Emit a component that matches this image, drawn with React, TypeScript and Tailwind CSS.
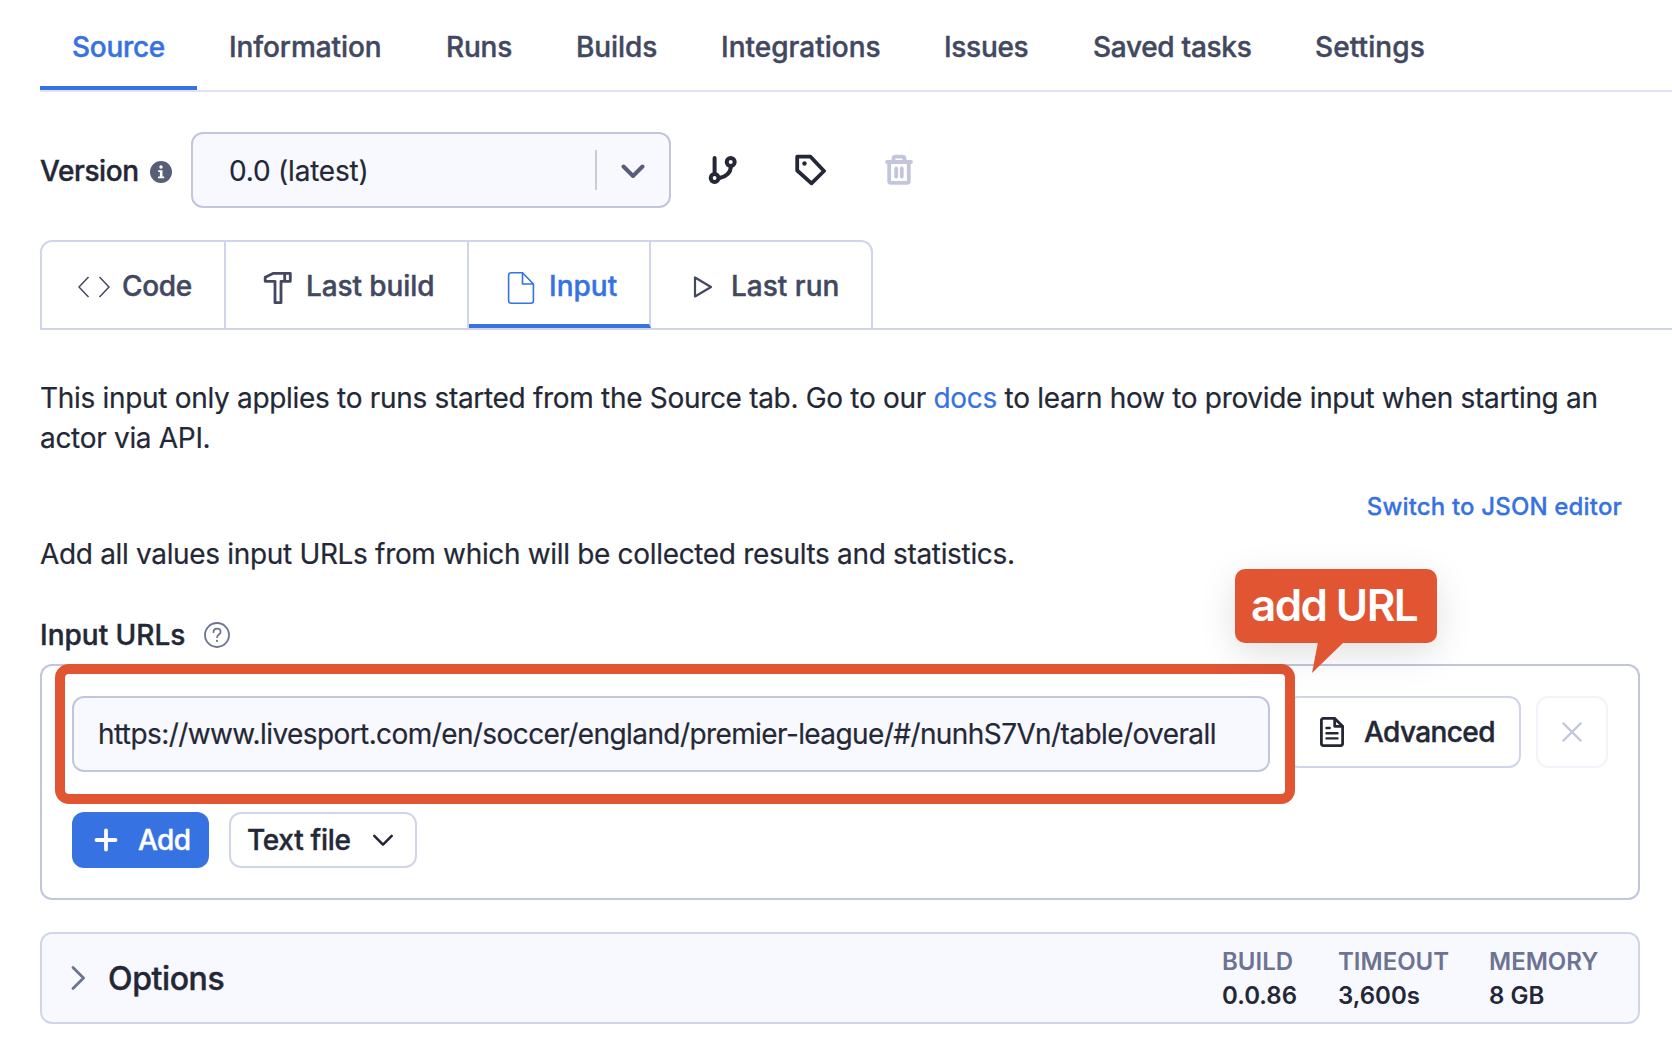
import React from "react";

const topTabs = [
  { label: "Source", cls: "w-[157px] tracking-[-0.3px]" },
  { label: "Information", cls: "w-[217px] tracking-[-0.1px]" },
  { label: "Runs", cls: "w-[130px] tracking-[-0.2px]" },
  { label: "Builds", cls: "w-[145px] tracking-[-0.1px]" },
  { label: "Integrations", cls: "w-[223px]" },
  { label: "Issues", cls: "w-[149px] tracking-[-0.3px]" },
  { label: "Saved tasks", cls: "w-[222px] tracking-[-0.3px]" },
  { label: "Settings", cls: "w-[180px] tracking-[0.1px]" },
];

const stats = [
  { label: "BUILD", value: "0.0.86", width: "w-[116px]" },
  { label: "TIMEOUT", value: "3,600s", width: "w-[151px]" },
  { label: "MEMORY", value: "8 GB", width: "w-[110px]" },
];

function InfoIcon() {
  return (
    <svg width="22" height="22" viewBox="0 0 22 22">
      <circle cx="11" cy="11" r="11" fill="#585e78" />
      <circle cx="11" cy="6" r="1.7" fill="#fff" />
      <path d="M8.2 9.2h4.3v6.3h1.7v1.8H8v-1.8h1.9V11H8.2z" fill="#fff" />
    </svg>
  );
}

function BranchIcon() {
  return (
    <svg width="30" height="30" viewBox="0 0 30 30" fill="none" stroke="#242836" strokeWidth="4" strokeLinecap="round">
      <path d="M6.600 3v14M23 11.500c-.5 6-4.500 10-11.500 11.500" />
      <circle cx="6.600" cy="23" r="3.900" />
      <circle cx="22.700" cy="7" r="4" />
    </svg>
  );
}

function TagIcon() {
  return (
    <svg width="32" height="32" viewBox="0 0 32 32" fill="none" stroke="#242836" strokeWidth="3.800" strokeLinejoin="round">
      <path d="M3.200 2.700h13.300L30 17 17.500 29.300 3.200 16.500z" />
      <circle cx="10.500" cy="9.500" r="2.200" fill="#242836" stroke="none" />
    </svg>
  );
}

function TrashIcon() {
  return (
    <svg width="28" height="32" viewBox="0 0 28 32" fill="none" stroke="#c1c6dd" strokeWidth="3.800" strokeLinecap="round" strokeLinejoin="round">
      <path d="M2 8h24M8.500 7.500V5c0-1.600.8-2.300 2.200-2.300h6.600c1.400 0 2.200.7 2.200 2.300V7.500M4.200 9v18c0 1.200.6 1.900 1.900 1.900h15.800c1.300 0 1.900-.7 1.900-1.900V9" />
      <path d="M11.200 14.500v8M16.800 14.500v8" />
    </svg>
  );
}

function CodeIcon() {
  return (
    <svg className="mt-1" width="32" height="22" viewBox="0 0 32 22" fill="none" stroke="#414860" strokeWidth="1.500">
      <path d="M10.500 1L1 11l9.500 10M21.500 1L31 11l-9.500 10" />
    </svg>
  );
}

function HammerIcon() {
  return (
    <svg className="mt-1.5" width="30" height="34" viewBox="0 0 30 34" fill="none" stroke="#414860" strokeWidth="2.800" strokeLinejoin="round">
      <path d="M3.200 6.300L11.500 2.300h16.800v8H19V31.700h-6V10.300H3.200z" />
      <path d="M22.700 3v7" />
    </svg>
  );
}

function PageIcon() {
  return (
    <svg className="mt-1.5" width="28" height="34" viewBox="0 0 28 34" fill="none" stroke="#3672e2" strokeWidth="1.600" strokeLinejoin="round">
      <path d="M15.500 1.800H4C2.600 1.800 1.600 2.800 1.600 4.200v25.600c0 1.400 1 2.400 2.400 2.400h20c1.400 0 2.400-1 2.400-2.400V13z" />
      <path d="M15.500 1.800V13h10.900" />
    </svg>
  );
}

function PlayIcon() {
  return (
    <svg className="mt-1" width="20" height="24" viewBox="0 0 20 24" fill="none" stroke="#414860" strokeWidth="2.200" strokeLinejoin="round">
      <path d="M2 2.500v19L18 12z" />
    </svg>
  );
}

function HelpIcon() {
  return (
    <svg width="26" height="26" viewBox="0 0 26 26" fill="none" stroke="#6c7492" strokeWidth="1.800" strokeLinecap="round">
      <circle cx="13" cy="13" r="12" />
      <path d="M9.500 10.200c0-2.100 1.500-3.500 3.600-3.500s3.500 1.300 3.500 3.200c0 2.600-3.500 2.700-3.500 5.300" />
      <circle cx="13" cy="18.900" r="1.100" fill="#6c7492" stroke="none" />
    </svg>
  );
}

function DocIcon() {
  return (
    <svg width="24" height="30" viewBox="0 0 24 30" fill="none" stroke="#242836" strokeWidth="2.800" strokeLinecap="round" strokeLinejoin="round">
      <path d="M14.700 1.400H3.400c-1.200 0-2 .8-2 2v23.200c0 1.200.8 2 2 2h17.200c1.200 0 2-.8 2-2V9.300z" />
      <path d="M14.700 1.800v7.500h7.500" />
      <path d="M6.500 11h3.200M6.500 16.200h11M6.500 21.400h11" strokeWidth="2.400" />
    </svg>
  );
}

function Chevron({ size, stroke, color, down }: { size: number; stroke: number; color: string; down?: boolean }) {
  return (
    <svg width={size} height={size} viewBox="0 0 24 24" fill="none" stroke={color} strokeWidth={stroke} strokeLinecap="round" strokeLinejoin="round">
      <path d={down ? "M2.500 7.500l9.500 9.500 9.500-9.500" : "M7 1.500l10.500 10.500L7 22.500"} />
    </svg>
  );
}

export default function App() {
  return (
    <div className="h-[1050px] w-[1672px] overflow-hidden bg-white pl-10 font-['Inter','Liberation_Sans',sans-serif] text-[28px] text-[#242836]">
      <nav className="flex h-[92px] border-b-2 border-[#e0e3f2] font-medium text-[#414860] [-webkit-text-stroke:0.4px]">
        {topTabs.map((tab, i) => (
          <a
            key={tab.label}
            className={
              (i === 0 ? "border-b-4 border-[#3672e2] text-[#3672e2] " : "") +
              "h-[90px] shrink-0 whitespace-nowrap pl-8 leading-[94px] " +
              tab.cls
            }
          >
            {tab.label}
          </a>
        ))}
      </nav>

      <div className="mt-10 flex h-[76px] items-center">
        <span className="w-[110px] pt-px font-medium tracking-[-0.4px] [-webkit-text-stroke:0.4px]">Version</span>
        <span className="pt-[3px]"><InfoIcon /></span>
        <div className="ml-[19px] flex h-[76px] w-[480px] items-center rounded-[12px] border-2 border-[#c1c6dd] bg-[#f8f9fe] pl-9">
          <span className="grow pt-px tracking-[-0.2px] [-webkit-text-stroke:0.2px]">0.0 (latest)</span>
          <span className="h-10 w-0.5 bg-[#ccc]" />
          <span className="flex w-[72px] justify-center pt-px">
            <Chevron size={24} stroke={4} color="#585e78" down />
          </span>
        </div>
        <div className="ml-[37px] flex items-center">
          <BranchIcon />
          <span className="ml-[56px]"><TagIcon /></span>
          <span className="ml-[59px]"><TrashIcon /></span>
        </div>
      </div>

      <div className="mt-8 flex h-[90px] border-b-2 border-[#d1d5e9] font-medium text-[#414860] [-webkit-text-stroke:0.4px]">
        <div className="flex w-[186px] items-center rounded-tl-[12px] border-x-2 border-t-2 border-[#d1d5e9] pl-9">
          <CodeIcon />
          <span className="ml-3 pt-px tracking-[-0.3px]">Code</span>
        </div>
        <div className="flex w-[243px] items-center border-r-2 border-t-2 border-[#d1d5e9] pl-9">
          <HammerIcon />
          <span className="ml-3.5 pt-px tracking-[-0.1px]">Last build</span>
        </div>
        <div className="flex w-[182px] items-center border-b-4 border-r-2 border-t-2 border-b-[#3672e2] border-r-[#d1d5e9] border-t-[#d1d5e9] pl-[38px] pt-1 text-[#3672e2]">
          <PageIcon />
          <span className="ml-[14px] pt-px">Input</span>
        </div>
        <div className="flex w-[222px] items-center rounded-tr-[12px] border-r-2 border-t-2 border-[#d1d5e9] pl-[42px]">
          <PlayIcon />
          <span className="ml-[18px] pt-px">Last run</span>
        </div>
      </div>

      <div className="mt-12 w-[1600px] leading-10 [-webkit-text-stroke:0.2px]">
        <p className="tracking-[-0.31px]">
          This input only applies to runs started from the Source tab. Go to our <a className="text-[#3672e2]">docs</a> to
          learn how to provide input when starting an <br />
          actor via API.
        </p>
      </div>

      <div className="mt-9 flex h-[26px] w-[1582px] items-center justify-end text-[24px] font-medium tracking-[0.16px] text-[#3672e2] [-webkit-text-stroke:0.3px]">
        Switch to JSON editor
      </div>
      <p className="mt-3.5 leading-10 tracking-[-0.33px] [-webkit-text-stroke:0.2px]">
        Add all values input URLs from which will be collected results and statistics.
      </p>

      <div className="mt-10 flex h-10 items-center pt-px">
        <span className="w-[146px] whitespace-nowrap font-medium [-webkit-text-stroke:0.4px]">Input URLs</span>
        <span className="ml-[18px]"><HelpIcon /></span>
      </div>

      <section className="relative mt-[10px] h-[236px] w-[1600px] rounded-[12px] border-2 border-[#c1c6dd] px-[30px] pt-[30px]">
        <div className="flex">
          <div className="flex h-[76px] w-[1198px] shrink-0 items-center whitespace-nowrap rounded-[12px] border-2 border-[#c1c6dd] bg-[#f8f9fe] pl-6 tracking-[-0.59px] [-webkit-text-stroke:0.2px]">
            https://www.livesport.com/en/soccer/england/premier-league/#/nunhS7Vn/table/overall
          </div>
          <button className="ml-4 flex h-[72px] w-[235px] shrink-0 items-center rounded-[12px] border-2 border-[#d1d5e9] pl-8 font-medium [-webkit-text-stroke:0.4px]">
            <DocIcon />
            <span className="ml-5 tracking-[-0.6px]">Advanced</span>
          </button>
          <button className="ml-[15px] flex h-[72px] w-[72px] shrink-0 items-center justify-center rounded-[12px] border-2 border-[#f2f3fb]">
            <svg width="20" height="20" viewBox="0 0 20 20" stroke="#c1c6dd" strokeWidth="2.400" strokeLinecap="round">
              <path d="M1.500 1.500l17 17M18.500 1.500l-17 17" />
            </svg>
          </button>
        </div>
        <div className="mt-10 flex gap-5 font-medium [-webkit-text-stroke:0.4px]">
          <button className="flex h-14 w-[137px] items-center rounded-[12px] bg-[#3672e2] pl-[22px] text-white">
            <svg width="24" height="24" viewBox="0 0 24 24" stroke="#fff" strokeWidth="3.800" strokeLinecap="round">
              <path d="M12 2.500v19M2.500 12h19" />
            </svg>
            <span className="ml-5 tracking-[-0.6px]">Add</span>
          </button>
          <button className="flex h-14 w-[188px] items-center rounded-[12px] border-2 border-[#d1d5e9] pl-4">
            <span className="w-[104px] whitespace-nowrap text-left tracking-[-0.3px]">Text file</span>
            <span className="ml-[21px]"><Chevron size={22} stroke={2.8} color="#242836" down /></span>
          </button>
        </div>

        {/* Annotation frame and its callout */}
        <div className="absolute -top-0.5 left-[13px] h-[140px] w-[1240px] rounded-[14px] border-[10px] border-[#e15533]" />
        <div className="absolute -top-[97px] left-[1193px] h-[74px] w-[202px] rounded-[10px] bg-[#e15533] shadow-[0_10px_36px_rgba(0,0,0,0.13)]">
          <span className="block whitespace-nowrap pl-4 text-[44px] font-semibold leading-[73px] tracking-[-1.6px] text-white">add URL</span>
          <svg className="absolute left-[77px] top-[73px]" width="34" height="32" viewBox="0 0 34 32">
            <path d="M6 0h26L0 31z" fill="#e15533" />
          </svg>
        </div>
      </section>

      <section className="mt-8 flex h-[92px] w-[1600px] items-center rounded-[12px] border-2 border-[#d1d5e9] bg-[#f8f9fe] pl-6 font-medium">
        <Chevron size={24} stroke={2.8} color="#6c7492" />
        <span className="ml-[18px] grow pt-0.5 text-[32px] tracking-[-0.4px] [-webkit-text-stroke:0.4px]">Options</span>
        <div className="mr-[39px] flex pt-0.5 text-[24px] font-semibold leading-[34px]">
          {stats.map((s) => (
            <div key={s.label} className={s.width}>
              <div className="text-[#6c7492]">{s.label}</div>
              <div>{s.value}</div>
            </div>
          ))}
        </div>
      </section>
    </div>
  );
}
